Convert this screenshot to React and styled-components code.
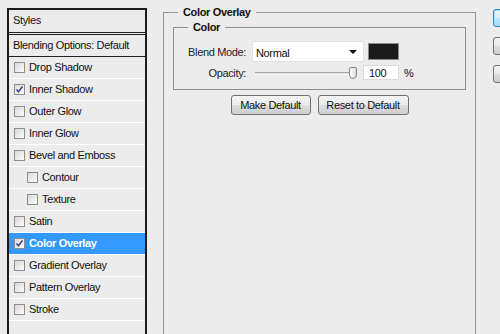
import React from "react";
import styled, { createGlobalStyle } from "styled-components";

const GlobalStyle = createGlobalStyle`
  html, body { margin: 0; padding: 0; background: #ececec; overflow: hidden; }
  body {
    font-family: "Liberation Sans", Arial, sans-serif;
    font-size: 11px;
    letter-spacing: -0.35px;
    color: #111;
  }
  * { box-sizing: border-box; }
`;

const Page = styled.div`
  display: flex;
  align-items: flex-start;
  width: 500px;
  height: 334px;
  overflow: hidden;
  padding-left: 7px;
`;

const StylesPanel = styled.div`
  flex: 0 0 140px;
  height: 340px;
  margin-top: 8px;
  border: 2px solid #1c1c1c;
  border-bottom: none;
  display: flex;
  flex-direction: column;
`;

const PanelHeader = styled.div`
  height: 25px;
  padding: 0 0 2px 4px;
  display: flex;
  align-items: center;
  border-bottom: 3px double #222;
`;

const BlendRow = styled.div`
  height: 22px;
  padding: 0 0 2px 4px;
  display: flex;
  align-items: center;
  border-bottom: 1px solid #222;
`;

const LayerRow = styled.div`
  height: 22px;
  display: flex;
  align-items: center;
  gap: 4px;
  padding-left: ${(p) => (p.$indent ? 18 : 5)}px;
  border-bottom: 1px solid #fff;
  background: ${(p) => (p.$selected ? "#3399ff" : "transparent")};
  color: ${(p) => (p.$selected ? "#fff" : "#111")};
  font-weight: ${(p) => (p.$selected ? "bold" : "normal")};
`;

const Name = styled.span`
  margin-bottom: 2px;
`;

const Box = styled.span`
  width: 11px;
  height: 11px;
  flex: 0 0 11px;
  border: 1px solid #8e8e8e;
  background: linear-gradient(135deg, #d9d9d9 0%, #eeeeee 60%, #fbfbfb 100%);
  display: flex;
  align-items: center;
  justify-content: center;
`;

const Main = styled.div`
  display: flex;
  align-items: flex-start;
  margin-left: 16px;
`;

const OuterSet = styled.fieldset`
  width: 313px;
  height: 340px;
  margin: 5px 0 0 0;
  padding: 1px 9px 0 9px;
  border: 1px solid #959595;
  border-bottom: none;
  min-width: 0;
`;

const Legend = styled.legend`
  font-weight: bold;
  line-height: 14px;
  padding: 0 5px;
  margin-left: ${(p) => p.$offset}px;
  color: #111;
`;

const InnerSet = styled.fieldset`
  margin: 0;
  padding: 7px 0 9px 0;
  border: 1px solid #8e8e8e;
  min-width: 0;
`;

const FormGrid = styled.div`
  display: grid;
  grid-template-columns: 72px auto;
  column-gap: 6px;
  row-gap: 3px;
  align-items: center;
`;

const Label = styled.span`
  text-align: right;
  color: #222;
`;

const Controls = styled.div`
  display: flex;
  align-items: center;
  gap: ${(p) => p.$gap}px;
`;

const Select = styled.div`
  width: 112px;
  height: 21px;
  background: #fff;
  border: 1px solid #e0e0e0;
  display: flex;
  align-items: center;
  justify-content: space-between;
  padding: 2px 6px 0 3px;
`;

const Arrow = styled.span`
  width: 0;
  height: 0;
  border-left: 4px solid transparent;
  border-right: 4px solid transparent;
  border-top: 4px solid #111;
  margin-top: -1px;
`;

const Swatch = styled.div`
  width: 31px;
  height: 17px;
  background: #1a1a1a;
  border: 1px solid #8a8a8a;
`;

const Slider = styled.div`
  position: relative;
  width: 106px;
  height: 15px;
`;

const Track = styled.div`
  position: absolute;
  left: 3px;
  right: 2px;
  top: 7px;
  height: 3px;
  border-top: 1px solid #a4a4a4;
  background: #e2e2e2;
  border-bottom: 1px solid #fafafa;
`;

const Thumb = styled.div`
  position: absolute;
  right: 1px;
  top: 2px;
  width: 8px;
  height: 12px;
  border: 1px solid #888;
  border-radius: 2px 2px 4px 4px;
  background: linear-gradient(to right, #fdfdfd, #dcdcdc);
`;

const NumInput = styled.div`
  width: 36px;
  height: 15px;
  background: #fff;
  border: 1px solid #dcdcdc;
  padding: 1px 0 0 5px;
  line-height: 13px;
`;

const ButtonRow = styled.div`
  display: flex;
  justify-content: center;
  gap: 7px;
  margin-top: 5px;
`;

const Button = styled.div`
  width: ${(p) => p.$w}px;
  height: 20px;
  border: 1px solid #707070;
  border-radius: 3px;
  background: linear-gradient(#f4f4f4 0%, #ebebeb 50%, #dddddd 51%, #cfcfcf 100%);
  display: flex;
  align-items: center;
  justify-content: center;
  color: #111;
`;

const SideButtons = styled.div`
  display: flex;
  flex-direction: column;
  gap: 10px;
  margin: 9px 0 0 17px;
`;

const SideButton = styled.div`
  width: 80px;
  height: 18px;
  border-radius: 3px;
  border: 1px solid ${(p) => (p.$default ? "#3c7fb1" : "#707070")};
  background: ${(p) =>
    p.$default
      ? "linear-gradient(#eaf6fd 0%, #d9f0fc 50%, #bee6fd 51%, #a7d9f5 100%)"
      : "linear-gradient(#f2f2f2 0%, #ebebeb 50%, #dddddd 51%, #cfcfcf 100%)"};
  box-shadow: ${(p) => (p.$default ? "inset 0 0 0 1px #9ee0ff" : "none")};
`;

const Check = () => (
  <svg width="9" height="9" viewBox="0 0 9 9">
    <path d="M1.5 4.5 L3.5 6.8 L7.5 1.5" fill="none" stroke="#3f4a8c" strokeWidth="1.6" />
  </svg>
);

const layers = [
  { name: "Drop Shadow" },
  { name: "Inner Shadow", checked: true },
  { name: "Outer Glow" },
  { name: "Inner Glow" },
  { name: "Bevel and Emboss" },
  { name: "Contour", indent: true },
  { name: "Texture", indent: true },
  { name: "Satin" },
  { name: "Color Overlay", checked: true, selected: true },
  { name: "Gradient Overlay" },
  { name: "Pattern Overlay" },
  { name: "Stroke" },
];

export default function App() {
  return (
    <>
      <GlobalStyle />
      <Page>
        <StylesPanel>
          <PanelHeader>Styles</PanelHeader>
          <BlendRow>Blending Options: Default</BlendRow>
          {layers.map((l) => (
            <LayerRow key={l.name} $indent={l.indent} $selected={l.selected}>
              <Box>{l.checked && <Check />}</Box>
              <Name>{l.name}</Name>
            </LayerRow>
          ))}
        </StylesPanel>
        <Main>
          <OuterSet>
            <Legend $offset={5}>Color Overlay</Legend>
            <InnerSet>
              <Legend $offset={14}>Color</Legend>
              <FormGrid>
                <Label>Blend Mode:</Label>
                <Controls $gap={4}>
                  <Select>
                    <span>Normal</span>
                    <Arrow />
                  </Select>
                  <Swatch />
                </Controls>
                <Label>Opacity:</Label>
                <Controls $gap={5}>
                  <Slider>
                    <Track />
                    <Thumb />
                  </Slider>
                  <NumInput>100</NumInput>
                  <span>%</span>
                </Controls>
              </FormGrid>
            </InnerSet>
            <ButtonRow>
              <Button $w={80}>Make Default</Button>
              <Button $w={91}>Reset to Default</Button>
            </ButtonRow>
          </OuterSet>
          <SideButtons>
            <SideButton $default />
            <SideButton />
            <SideButton />
          </SideButtons>
        </Main>
      </Page>
    </>
  );
}
